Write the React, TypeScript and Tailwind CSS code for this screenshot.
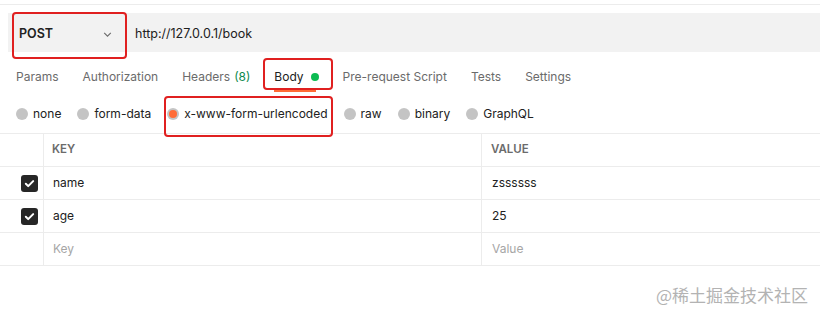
import React from "react";

const tabs = [
  { label: "Params" },
  { label: "Authorization" },
  { label: "Headers", count: "(8)" },
  { label: "Body", active: true },
  { label: "Pre-request Script" },
  { label: "Tests" },
  { label: "Settings" },
];

const bodyTypes = ["none", "form-data", "x-www-form-urlencoded", "raw", "binary", "GraphQL"];

const rows = [
  { key: "name", value: "zssssss" },
  { key: "age", value: "25" },
];

const Check = () => (
  <span className="flex h-[17px] w-[17px] items-center justify-center rounded-[3px] bg-[#262626]">
    <svg width="11" height="11" viewBox="0 0 12 12" fill="none">
      <path d="M2 6.3l2.6 2.6L10 3.4" stroke="#fff" strokeWidth="2.2" strokeLinecap="round" strokeLinejoin="round" />
    </svg>
  </span>
);

export default function App() {
  return (
    <div className="relative h-[316px] w-[820px] overflow-hidden bg-white font-['Inter',sans-serif] text-[12px] text-[#212121]">
      <div className="mt-[4px] h-px bg-[#ececec]" />

      {/* url bar */}
      <div className="ml-[8px] mt-[8px] flex h-[39px] bg-[#f2f2f2] pt-[3px] text-[12.5px]">
        <div className="relative flex w-[117px] items-center justify-between pl-[11px] pr-[12px]">
          <span className="font-semibold">POST</span>
          <svg width="11" height="11" viewBox="0 0 10 10" fill="none">
            <path d="M2 3.5l3 3 3-3" stroke="#6b6b6b" strokeWidth="1" />
          </svg>
          <div className="absolute left-[4px] top-[-4px] h-[47px] w-[115px] rounded-[4px] border-2 border-[#e02020]" />
        </div>
        <div className="-mt-[3px] w-[1px] bg-white" />
        <div className="flex items-center pl-[9px]">http://127.0.0.1/book</div>
      </div>

      {/* tabs */}
      <div className="mt-[8px] flex h-[34px] items-stretch pl-[16px] text-[#6b6b6b]">
        {tabs.map((t) => (
          <div key={t.label} className="relative mr-[24px] flex items-center last:mr-0">
            <span className={t.active ? "text-[#212121]" : ""}>
              {t.label}
              {t.count && <span className="ml-[4px] text-[#0c8a4e]">{t.count}</span>}
            </span>
            {t.active && <span className="ml-[7px] h-[8px] w-[8px] rounded-full bg-[#0cbb52]" />}
            {t.active && (
              <>
                <div className="absolute bottom-[2px] left-0 h-[2px] w-[42px] bg-[#ff6c37]" />
                <div className="absolute left-[-11px] right-[-14px] top-[-2px] h-[32px] rounded-[4px] border-2 border-[#e02020]" />
              </>
            )}
          </div>
        ))}
      </div>

      {/* body types */}
      <div className="flex h-[39px] pl-[16px] text-[#212121]">
        {bodyTypes.map((b) => {
          const sel = b === "x-www-form-urlencoded";
          return (
            <div key={b} className="relative mr-[16px] flex items-center">
              <span className="mr-[5px] flex h-[12px] w-[12px] items-center justify-center rounded-full bg-[#c4c4c4]">
                {sel && <span className="h-[8px] w-[8px] rounded-full bg-[#ff6c37]" />}
              </span>
              <span>{b}</span>
              {sel && <div className="absolute left-[-3px] right-[-5px] top-[2px] h-[41px] rounded-[4px] border-2 border-[#e02020]" />}
            </div>
          );
        })}
      </div>

      {/* table */}
      <div className="border-t border-[#ececec]">
        <div className="flex h-[33px] border-b border-[#ececec] text-[11.5px] font-semibold text-[#6b6b6b]">
          <div className="w-[44px] border-r border-[#ececec]" />
          <div className="flex w-[438px] items-center border-r border-[#ececec] pl-[8px]">KEY</div>
          <div className="flex items-center pl-[9px]">VALUE</div>
        </div>
        {rows.map((r) => (
          <div key={r.key} className="flex h-[33px] border-b border-[#ececec]">
            <div className="flex w-[44px] items-center justify-end border-r border-[#ececec] pr-[5px]">
              <Check />
            </div>
            <div className="flex w-[438px] items-center border-r border-[#ececec] pl-[9px]">{r.key}</div>
            <div className="flex items-center pl-[10px]">{r.value}</div>
          </div>
        ))}
        <div className="flex h-[33px] border-b border-[#ececec] text-[#a6a6a6]">
          <div className="w-[44px] border-r border-[#ececec]" />
          <div className="flex w-[438px] items-center border-r border-[#ececec] pl-[9px]">Key</div>
          <div className="flex items-center pl-[10px]">Value</div>
        </div>
      </div>

      <div className="absolute right-[12px] top-[282px] font-['Noto_Sans_CJK_SC',sans-serif] text-[17px] text-[#b3b3b3]">
        @稀土掘金技术社区
      </div>
    </div>
  );
}
